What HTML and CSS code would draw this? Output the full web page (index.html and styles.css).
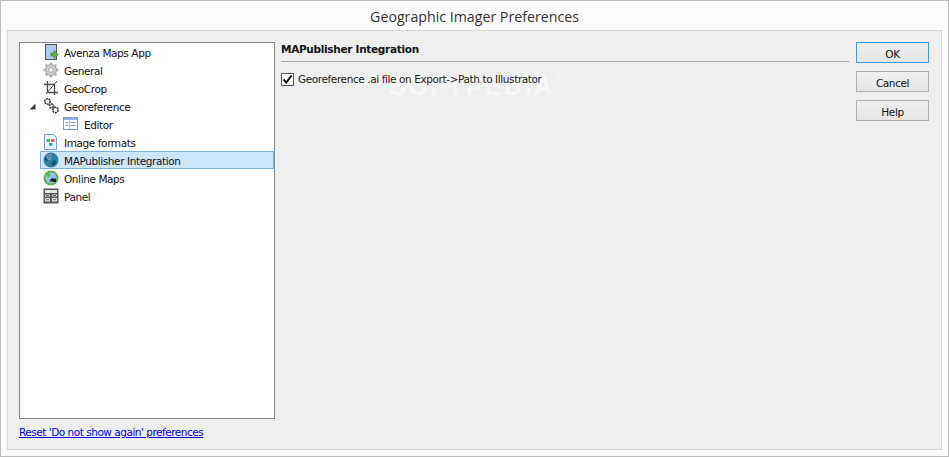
FILE: index.html
```html
<!DOCTYPE html>
<html lang="en">
<head>
<meta charset="utf-8">
<title>Geographic Imager Preferences</title>
<link rel="stylesheet" href="styles.css">
</head>
<body>
<div class="window">
  <header class="titlebar">Geographic Imager Preferences</header>
  <main class="panel">
    <section class="left">
      <div class="tree">
        <div class="row">
          <svg class="icon" viewBox="0 0 16 16"><rect x="2.500" y="0.500" width="11" height="15" fill="#a9cdf0" stroke="#4a5560"/><path d="M8 9h3V6.500l4.500 4-4.500 4V12H8z" fill="#6cb33f" stroke="#3f7f2a" stroke-width=".7"/></svg>
          <span>Avenza Maps App</span>
        </div>
        <div class="row">
          <svg class="icon" viewBox="0 0 16 16"><path d="M8 .5v3M8 12.500v3M.5 8h3M12.500 8h3M2.700 2.700l2.100 2.100M11.200 11.200l2.100 2.100M13.300 2.700l-2.100 2.100M4.800 11.200l-2.100 2.100" stroke="#b4b4b4" stroke-width="2.600"/><circle cx="8" cy="8" r="5.500" fill="#cfcfcf" stroke="#a4a4a4"/><circle cx="8" cy="8" r="2.400" fill="#f4f4f4" stroke="#9a9a9a" stroke-width=".8"/></svg>
          <span>General</span>
        </div>
        <div class="row">
          <svg class="icon" viewBox="0 0 16 16" fill="none" stroke="#4c4c4c" stroke-width="1.300"><path d="M4.500 1v11.500H15M1 4.500h10.500V15"/><path d="M3 14 14 1" stroke-width="1"/></svg>
          <span>GeoCrop</span>
        </div>
        <div class="row">
          <svg class="arrow" viewBox="0 0 7 7"><path d="M6.500 .5V6.500H.5z" fill="#404040"/></svg>
          <svg class="icon" viewBox="0 0 16 16" fill="#fff" stroke="#333" stroke-width="1.600" stroke-dasharray="2 .7"><circle cx="4.500" cy="3.500" r="2.700"/><circle cx="8.500" cy="8" r="2"/><circle cx="12.500" cy="12" r="2.700"/></svg>
          <span>Georeference</span>
        </div>
        <div class="row child">
          <svg class="icon" viewBox="0 0 16 16"><rect x=".5" y="1.500" width="14" height="12" fill="#fafcff" stroke="#7b9ccc"/><rect x="1" y="2" width="13" height="2" fill="#8fb0e0"/><path d="M2.500 6.500h3M2.500 9.500h3M7.500 6.500h5M7.500 9.500h5" stroke="#8a94a6"/><path d="M6.500 4v9" stroke="#b9c6da"/></svg>
          <span>Editor</span>
        </div>
        <div class="row">
          <svg class="icon" viewBox="0 0 16 16"><path d="M1.500.5h9l3 3v12h-12z" fill="#eef5fd" stroke="#6f9fd8"/><rect x="3.500" y="5" width="3.500" height="3" fill="#5fb35f"/><rect x="8" y="5" width="3.500" height="3" fill="#e0605a"/><rect x="6" y="9" width="3.500" height="3" fill="#4f9fe0"/></svg>
          <span>Image formats</span>
        </div>
        <div class="row selected">
          <svg class="icon" viewBox="0 0 16 16"><circle cx="8" cy="8" r="7.500" fill="#2f7f9f"/><path d="M4 3c2-1 4 0 5 1s-1 3-3 3-1 3-3 2-1-5 1-6zM10 9c2-1 4 0 3 2s-3 3-4 2 0-3 1-4z" fill="#0f4f6f"/><circle cx="6" cy="5" r="3" fill="#9fd4ea" opacity=".5"/></svg>
          <span>MAPublisher Integration</span>
        </div>
        <div class="row">
          <svg class="icon" viewBox="0 0 16 16"><circle cx="8" cy="8" r="7.500" fill="#5fae4f"/><circle cx="8" cy="8" r="5.500" fill="#8fc3e8"/><path d="M4 4c2-1 4 0 3 2S4 7 4 4z" fill="#5fae4f"/><path d="M7 11a3 3 0 0 1 5-2l1-1v4H9l1-1a2 2 0 0 0-2 1z" fill="#222"/></svg>
          <span>Online Maps</span>
        </div>
        <div class="row">
          <svg class="icon" viewBox="0 0 16 16"><rect x=".5" y=".5" width="15" height="15" fill="#555"/><path d="M2 2h12v3H2zM2 6.500h5v2H2zM9 6.500h5v2H9zM2 10h5v3.500H2zM9 10h5v3.500H9z" fill="#e4e4e4"/><path d="M3 11.700h3M10 11.700h3M3 7.500h3M10 7.500h3" stroke="#666"/></svg>
          <span>Panel</span>
        </div>
      </div>
      <a class="reset" href="#">Reset 'Do not show again' preferences</a>
    </section>
    <section class="content">
      <h1 class="heading">MAPublisher Integration</h1>
      <div class="watermark">SOFTPEDIA<sup class="reg">®</sup></div>
      <label class="check">
        <span class="box"><svg viewBox="0 0 11 11"><path d="M1.500 5.500 4.300 8.500 9.500 1.500" fill="none" stroke="#111" stroke-width="2"/></svg></span>
        <span>Georeference .ai file on Export-&gt;Path to Illustrator</span>
      </label>
    </section>
    <aside class="buttons">
      <button class="btn default">OK</button>
      <button class="btn">Cancel</button>
      <button class="btn">Help</button>
    </aside>
  </main>
</div>
</body>
</html>
```
FILE: styles.css
```css
* { box-sizing: border-box; }
html, body { margin: 0; height: 100%; }
body {
  font-family: "DejaVu Sans", sans-serif;
  font-size: 10.500px;
  letter-spacing: -.4px;
  color: #111;
  background: #fff;
}
.window {
  width: 949px;
  height: 457px;
  display: flex;
  flex-direction: column;
  border: 1px solid #bcbcbc;
  background: #fcfcfc;
  padding: 0 6px 6px;
}
.titlebar {
  height: 29px;
  flex: none;
  display: flex;
  align-items: center;
  justify-content: center;
  font-family: "Open Sans", sans-serif;
  font-size: 14.200px;
  letter-spacing: 0;
  color: #333;
  padding-top: 2px;
}
.panel {
  flex: 1;
  display: flex;
  border: 1px solid #d6d6d6;
  background: #efefef;
  padding: 11px 12px 8px 11px;
  min-height: 0;
}
.left {
  width: 256px;
  flex: none;
  display: flex;
  flex-direction: column;
}
.tree {
  flex: 1;
  border: 1px solid #85888d;
  background: #fff;
}
.row {
  height: 18px;
  display: flex;
  align-items: center;
  gap: 5px;
  margin-left: 20px;
  padding-left: 2px;
  border: 1px solid transparent;
  line-height: 16px;
  white-space: nowrap;
  position: relative;
}
.row span { position: relative; top: 1px; }
.row.child { padding-left: 22px; gap: 5px; }
.row.selected {
  background: #cde6fc;
  border-color: #7eb4ea;
}
.icon { width: 16px; height: 16px; flex: none; }
.arrow {
  position: absolute;
  left: -12px;
  top: 5px;
  width: 7px;
  height: 7px;
}
.reset {
  flex: none;
  margin-top: 6px;
  height: 16px;
  line-height: 15px;
  color: #0000ee;
  letter-spacing: -.48px;
  text-decoration: underline;
  white-space: nowrap;
}
.content {
  flex: 1;
  padding: 0 7px 0 6px;
  position: relative;
  min-width: 0;
}
.heading {
  margin: 0;
  height: 20px;
  font-size: 10.500px;
  font-weight: 700;
  letter-spacing: -.3px;
  line-height: 14px;
  border-bottom: 1px solid #a6a6a6;
  color: #111;
}
.check {
  margin-top: 9px;
  display: flex;
  align-items: center;
  gap: 4px;
  height: 16px;
  white-space: nowrap;
  color: #222;
  position: relative;
}
.box {
  width: 13px;
  height: 13px;
  flex: none;
  border: 1px solid #555;
  background: #fff;
  display: flex;
  align-items: center;
  justify-content: center;
}
.box svg { width: 11px; height: 11px; }
.watermark {
  position: absolute;
  left: 114px;
  top: 31px;
  font-family: "Liberation Sans", sans-serif;
  font-size: 25px;
  font-weight: 700;
  letter-spacing: 2.500px;
  color: #fff;
  opacity: .55;
  line-height: 26px;
  white-space: nowrap;
}
.reg { font-size: 9px; font-weight: 400; vertical-align: 14px; line-height: 0; letter-spacing: 0; }
.buttons {
  width: 73px;
  flex: none;
  display: flex;
  flex-direction: column;
  gap: 8px;
}
.btn {
  height: 21px;
  padding: 2px 0 0;
  border: 1px solid #adadad;
  background: linear-gradient(#f0f0f0, #e5e5e5);
  font: inherit;
  letter-spacing: -.4px;
  color: #111;
}
.btn.default { border-color: #3c99ec; }
```
